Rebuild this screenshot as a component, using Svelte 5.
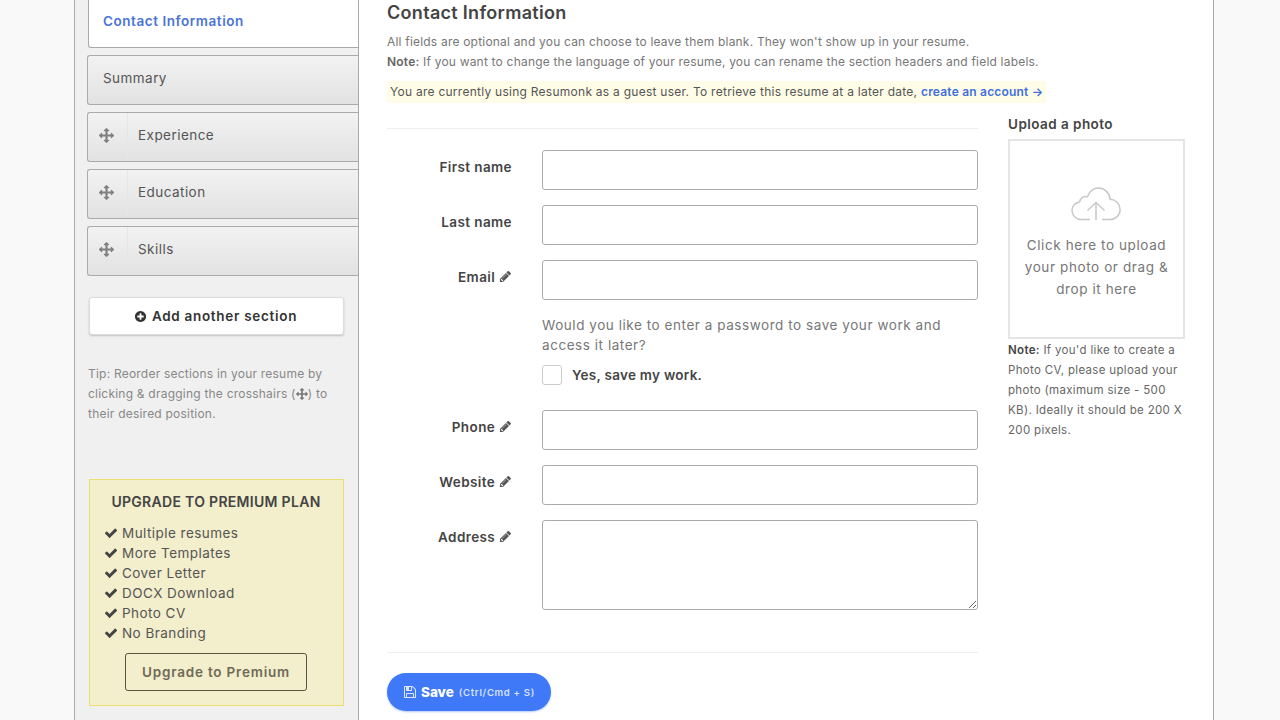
<script>
  const MOVE = 'M1792 896q0 26-19 45l-256 256q-19 19-45 19t-45-19-19-45v-128h-384v384h128q26 0 45 19t19 45-19 45l-256 256q-19 19-45 19t-45-19l-256-256q-19-19-19-45t19-45 45-19h128v-384h-384v128q0 26-19 45t-45 19-45-19l-256-256q-19-19-19-45t19-45l256-256q19-19 45-19t45 19 19 45v128h384v-384h-128q-26 0-45-19t-19-45 19-45l256-256q19-19 45-19t45 19l256 256q19 19 19 45t-19 45-45 19h-128v384h384v-128q0-26 19-45t45-19 45 19l256 256q19 19 19 45z';
  const PENCIL = 'M491 1536l91-91-235-235-91 91v107h128v128h107zm523-928q0-22-22-22-10 0-17 7l-542 542q-7 7-7 17 0 22 22 22 10 0 17-7l542-542q7-7 7-17zm-54-192l416 416-832 832h-416v-416zm683 96q0 53-37 90l-166 166-416-416 166-165q36-38 90-38 53 0 91 38l235 234q37 39 37 91z';
  const CHECK = 'M1671 566q0 40-28 68l-724 724-136 136q-28 28-68 28t-68-28l-136-136-362-362q-28-28-28-68t28-68l136-136q28-28 68-28t68 28l294 295 656-657q28-28 68-28t68 28l136 136q28 28 28 68z';
  const PLUS = 'M1344 960v-128q0-26-19-45t-45-19h-256v-256q0-26-19-45t-45-19h-128q-26 0-45 19t-19 45v256h-256q-26 0-45 19t-19 45v128q0 26 19 45t45 19h256v256q0 26 19 45t45 19h128q26 0 45-19t19-45v-256h256q26 0 45-19t19-45zm320-64q0 209-103 385.5t-279.5 279.5-385.5 103-385.5-103-279.5-279.5-103-385.5 103-385.5 279.5-279.5 385.5-103 385.5 103 279.5 279.5 103 385.5z';
  const SAVE = 'M512 1536h768v-384h-768v384zm896 0h128v-896q0-14-10-38.5t-20-34.5l-281-281q-10-10-34-20t-39-10v416q0 40-28 68t-68 28h-576q-40 0-68-28t-28-68v-416h-128v1280h128v-416q0-40 28-68t68-28h832q40 0 68 28t28 68v416zm-384-928v-320q0-13-9.5-22.5t-22.5-9.5h-192q-13 0-22.5 9.5t-9.5 22.5v320q0 13 9.5 22.5t22.5 9.5h192q13 0 22.5-9.5t9.5-22.5zm640 32v928q0 40-28 68t-68 28h-1344q-40 0-68-28t-28-68v-1344q0-40 28-68t68-28h928q40 0 88 20t76 48l280 280q28 28 48 76t20 88z';

  const draggable = ['Experience', 'Education', 'Skills'];
  const perks = ['Multiple resumes', 'More Templates', 'Cover Letter', 'DOCX Download', 'Photo CV', 'No Branding'];
</script>

<div class="page">
  <aside class="sidebar">
    <div class="tab active">Contact Information</div>
    <div class="tab">Summary</div>
    {#each draggable as name}
      <div class="tab drag">
        <span class="handle">
          <svg class="move" viewBox="0 0 1792 1792"><path d={MOVE} /></svg>
        </span>
        <span class="tab-name">{name}</span>
      </div>
    {/each}

    <button class="add">
      <svg viewBox="0 0 1792 1792"><path d={PLUS} /></svg>
      Add another section
    </button>

    <p class="tip">
      Tip: Reorder sections in your resume by clicking &amp; dragging the crosshairs
      (<svg class="tip-icon" viewBox="0 0 1792 1792"><path d={MOVE} /></svg>) to their desired position.
    </p>

    <div class="promo">
      <h4>UPGRADE TO PREMIUM PLAN</h4>
      <ul>
        {#each perks as perk}
          <li><svg viewBox="0 0 1792 1792"><path d={CHECK} /></svg>{perk}</li>
        {/each}
      </ul>
      <button class="upgrade">Upgrade to Premium</button>
    </div>
  </aside>

  <main class="content">
    <h2>Contact Information</h2>
    <p class="intro">All fields are optional and you can choose to leave them blank. They won't show up in your resume.</p>
    <p class="intro"><strong>Note:</strong> If you want to change the language of your resume, you can rename the section headers and field labels.</p>
    <p class="guest">You are currently using Resumonk as a guest user. To retrieve this resume at a later date, <a href="#top">create an account →</a></p>

    <div class="columns">
      <div class="form">
        <div class="row">
          <label for="first">First name</label>
          <input id="first" type="text" />
        </div>
        <div class="row">
          <label for="last">Last name</label>
          <input id="last" type="text" />
        </div>
        <div class="row">
          <label for="email">Email <svg viewBox="0 0 1792 1792"><path d={PENCIL} /></svg></label>
          <input id="email" type="text" />
        </div>
        <div class="row save-work">
          <div class="password">
            <p>Would you like to enter a password to save your work and access it later?</p>
            <div class="check"><span class="box"></span><b>Yes, save my work.</b></div>
          </div>
        </div>
        <div class="row">
          <label for="phone">Phone <svg viewBox="0 0 1792 1792"><path d={PENCIL} /></svg></label>
          <input id="phone" type="text" />
        </div>
        <div class="row">
          <label for="website">Website <svg viewBox="0 0 1792 1792"><path d={PENCIL} /></svg></label>
          <input id="website" type="text" />
        </div>
        <div class="row">
          <label for="address">Address <svg viewBox="0 0 1792 1792"><path d={PENCIL} /></svg></label>
          <textarea id="address"></textarea>
        </div>
        <div class="actions">
          <button class="save">
            <svg viewBox="0 0 1792 1792"><path d={SAVE} /></svg>
            Save <small>(Ctrl/Cmd + S)</small>
          </button>
        </div>
      </div>

      <div class="photo">
        <h5>Upload a photo</h5>
        <div class="drop">
          <svg class="cloud" viewBox="0 0 50 34">
            <path d="M19 32.500H10.500C5 32.500 1 28.600 1 23.600c0-4.400 3.100-8 7.500-8.700C9.600 10.800 13 8.800 16.300 9.800 18.600 4.300 22.800 1 27.500 1c6.300 0 11 4.700 11.600 11.200 5.800.3 10 4.800 10 10.300 0 5.600-4.400 10-10.200 10H31" />
            <path d="M25 33V16M16.500 23.500 25 15.500l8.500 8" />
          </svg>
          <span>Click here to upload your photo or drag &amp; drop it here</span>
        </div>
        <p><strong>Note:</strong> If you'd like to create a Photo CV, please upload your photo (maximum size - 500 KB). Ideally it should be 200 X 200 pixels.</p>
      </div>
    </div>
  </main>
</div>

<style>
  :global(body) {
    background: #f9f9f9;
    overflow: hidden;
  }

  .page {
    display: flex;
    box-sizing: border-box;
    width: 1140px;
    height: 720px;
    margin-left: 74px;
    background: #fff;
    border-left: 1px solid #aaa;
    border-right: 1px solid #aaa;
    overflow: hidden;
    font-family: Inter, "Liberation Sans", sans-serif;
    color: #444;
  }

  /* Sidebar */
  .sidebar {
    flex: 0 0 284px;
    box-sizing: border-box;
    height: 720px;
    padding-left: 12px;
    background: #f0f0f0;
    border-right: 1px solid #aaa;
  }

  .tab {
    display: flex;
    align-items: center;
    box-sizing: border-box;
    height: 50px;
    margin-bottom: 7px;
    padding: 0 0 4px 15px;
    border: 1px solid #aaa;
    border-right: none;
    border-radius: 3px 0 0 3px;
    background: linear-gradient(#f2f2f2, #e2e2e2);
    font-size: 13.5px;
    color: #555;
    letter-spacing: 0.45px;
  }

  .tab.active {
    height: 48px;
    margin-left: 1px;
    margin-bottom: 7px;
    padding: 0 0 6px 14px;
    border-top: none;
    border-radius: 0 0 0 3px;
    background: #fff;
    color: #4a74d6;
    font-weight: 600;
    font-size: 13.5px;
    letter-spacing: 0.55px;
  }

  .tab.drag {
    padding: 0;
  }

  .handle {
    display: flex;
    align-items: center;
    justify-content: center;
    box-sizing: border-box;
    width: 40px;
    height: 100%;
    padding: 0 2px 4px 0;
    border-right: 1px solid #e6e6e6;
  }

  .move {
    width: 15px;
    height: 15px;
    fill: #808080;
  }

  .tab-name {
    padding: 0 0 4px 10px;
  }

  .add {
    display: flex;
    align-items: center;
    justify-content: center;
    gap: 5px;
    box-sizing: border-box;
    width: 255px;
    height: 38px;
    margin: 21px 0 0 2px;
    padding-right: 8px;
    background: #fff;
    border: 1px solid #ddd;
    border-radius: 3px;
    box-shadow: 0 1px 2px rgba(0, 0, 0, 0.2);
    font: 600 13.5px Inter, "Liberation Sans", sans-serif;
    letter-spacing: 0.7px;
    color: #333;
  }

  .add svg {
    width: 13px;
    height: 13px;
    fill: #333;
  }

  .tip {
    width: 250px;
    margin: 29px 0 0 1px;
    font-size: 12px;
    line-height: 20px;
    letter-spacing: 0.22px;
    color: #888;
  }

  .tip-icon {
    width: 12px;
    height: 12px;
    fill: #777;
    vertical-align: -2px;
  }

  .promo {
    box-sizing: border-box;
    width: 255px;
    height: 227px;
    margin: 55px 0 0 2px;
    padding: 13px 15px 0 14px;
    background: #f3eecb;
    border: 1px solid #efdf73;
    text-align: center;
  }

  .promo h4 {
    margin: 0;
    font-size: 14px;
    line-height: 17px;
    font-weight: 600;
    letter-spacing: 0.3px;
    color: #444;
    white-space: nowrap;
  }

  .promo ul {
    margin: 13px 0 0;
    padding: 0;
    list-style: none;
    text-align: left;
  }

  .promo li {
    display: flex;
    align-items: center;
    height: 20px;
    font-size: 13.5px;
    letter-spacing: 0.45px;
    color: #555;
  }

  .promo li svg {
    width: 14px;
    height: 14px;
    margin-right: 4px;
    fill: #444;
  }

  .upgrade {
    width: 182px;
    height: 38px;
    margin-top: 10px;
    background: transparent;
    border: 1px solid #5a5340;
    border-radius: 3px;
    font: 600 13.5px Inter, "Liberation Sans", sans-serif;
    letter-spacing: 0.8px;
    color: #6f6a58;
  }

  /* Main column */
  .content {
    flex: 1;
    padding: 0 0 0 28px;
  }

  h2 {
    margin: 0;
    padding-top: 2px;
    font-size: 18px;
    line-height: 22px;
    font-weight: 600;
    letter-spacing: 0.3px;
    color: #444;
  }

  .intro {
    margin: 0;
    font-size: 12px;
    line-height: 20px;
    letter-spacing: 0.2px;
    color: #777;
  }

  h2 + .intro {
    margin-top: 8px;
  }

  .intro strong {
    color: #666;
    font-weight: 600;
  }

  .guest {
    display: inline-block;
    margin: 9px 0 0;
    padding: 0 3px;
    background: #fffde8;
    font-size: 12px;
    line-height: 22px;
    letter-spacing: 0.26px;
    color: #555;
    white-space: nowrap;
  }

  .guest a {
    color: #3f6fe0;
    font-weight: 600;
    text-decoration: none;
    letter-spacing: 0.2px;
  }

  .columns {
    display: flex;
    gap: 30px;
  }

  .form {
    width: 591px;
    margin-top: 25px;
    padding-top: 21px;
    border-top: 1px solid #eee;
  }

  .photo {
    width: 177px;
    margin-top: 11px;
  }

  .row {
    display: grid;
    grid-template-columns: 125px 436px;
    column-gap: 30px;
    margin-bottom: 15px;
  }

  label {
    padding-top: 8px;
    text-align: right;
    font-size: 13.5px;
    line-height: 18px;
    font-weight: 600;
    letter-spacing: 0.4px;
    color: #444;
  }

  label svg {
    width: 13px;
    height: 13px;
    fill: #555;
    vertical-align: -1px;
  }

  input,
  textarea {
    display: block;
    box-sizing: border-box;
    width: 436px;
    height: 40px;
    padding: 8px;
    background: #fff;
    border: 1px solid #aaa;
    border-radius: 3px;
  }

  textarea {
    height: 90px;
  }

  .save-work {
    margin-bottom: 25px;
  }

  .password {
    grid-column: 2;
  }

  .password p {
    margin: 0;
    font-size: 13.5px;
    line-height: 20px;
    letter-spacing: 0.55px;
    color: #777;
  }

  .check {
    display: flex;
    align-items: center;
    gap: 10px;
    margin-top: 10px;
    font-size: 13.5px;
    letter-spacing: 0.27px;
    color: #444;
  }

  .check b {
    font-weight: 600;
  }

  .box {
    box-sizing: border-box;
    width: 20px;
    height: 20px;
    background: #fff;
    border: 1px solid #ccc;
    border-radius: 3px;
  }

  .actions {
    margin-top: 42px;
    padding-top: 20px;
    border-top: 1px solid #eee;
  }

  .save {
    display: flex;
    align-items: center;
    box-sizing: border-box;
    width: 164px;
    height: 38px;
    padding: 0 0 0 16px;
    background: #3f79f8;
    border: none;
    border-radius: 19px;
    box-shadow: 0 1px 2px rgba(63, 121, 248, 0.4);
    font: 800 13.5px Inter, "Liberation Sans", sans-serif;
    color: #fff;
    white-space: nowrap;
  }

  .save svg {
    width: 14px;
    height: 14px;
    margin-right: 4px;
    fill: #dbe6ff;
  }

  .save small {
    margin-left: 5px;
    font-size: 9.5px;
    font-weight: 600;
    letter-spacing: 0.7px;
    color: #d6e2ff;
  }

  h5 {
    margin: 0;
    font-size: 13.5px;
    line-height: 20px;
    font-weight: 600;
    letter-spacing: 0.45px;
    color: #444;
  }

  .drop {
    display: flex;
    flex-direction: column;
    align-items: center;
    box-sizing: border-box;
    width: 177px;
    height: 200px;
    margin-top: 5px;
    padding: 46px 10px 0;
    border: 2px solid #e5e5e5;
    text-align: center;
    font-size: 13.5px;
    line-height: 22px;
    letter-spacing: 0.6px;
    color: #777;
  }

  .cloud {
    width: 50px;
    height: 34px;
    margin: 0 2px 13px 0;
    fill: none;
    stroke: #c8c8c8;
    stroke-width: 1.5;
  }

  .photo p {
    margin: 1px 0 0;
    font-size: 11.5px;
    line-height: 20px;
    letter-spacing: 0.33px;
    color: #666;
  }

  .photo p strong {
    font-weight: 600;
    color: #444;
  }
</style>
